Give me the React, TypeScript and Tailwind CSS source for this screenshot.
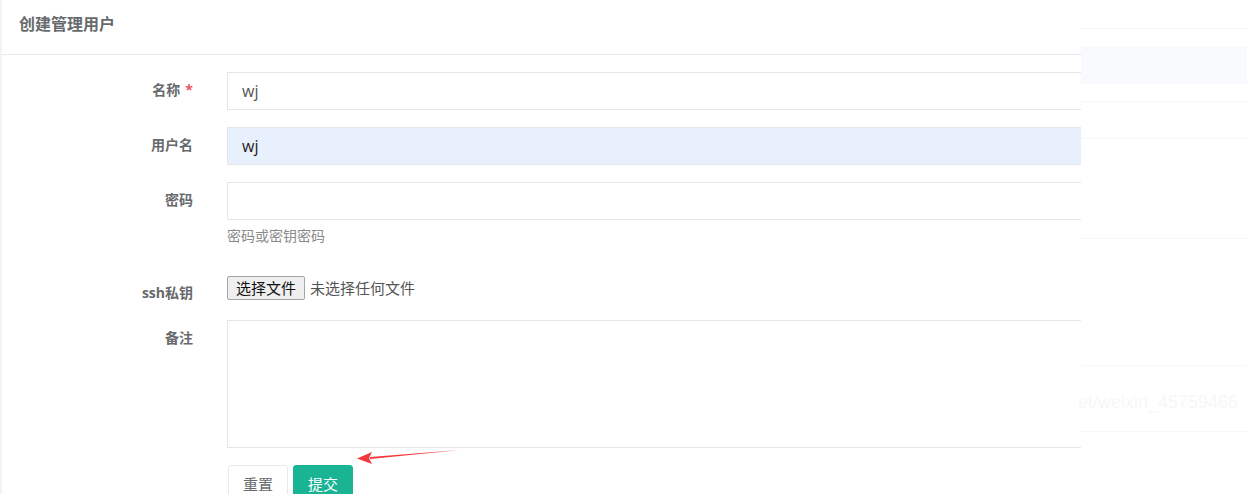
const font = 'font-["Open_Sans","Noto_Sans_CJK_SC",sans-serif]';

function FieldRow({
  label,
  required,
  labelPad = 'pt-[8px]',
  className = '',
  children,
}: {
  label: string;
  required?: boolean;
  labelPad?: string;
  className?: string;
  children: React.ReactNode;
}) {
  return (
    <div className={`flex items-start ${className}`}>
      <div className={`w-[193px] shrink-0 text-right text-[14px] leading-5 font-bold text-[#676a6c] ${labelPad}`}>
        {label}
        {required && <span className="ml-[5px] text-[#ed5565]">*</span>}
      </div>
      <div className="ml-[34px] flex-1 min-w-0 mr-[-12px]">{children}</div>
    </div>
  );
}

function Watermark() {
  return (
    <div className="relative w-[166px] shrink-0 h-full bg-white">
      <div className="h-[29px] border-b border-[#f6f6f6]" />
      <div className="h-[18px]" />
      <div className="h-[37px] bg-[#f9fafd]" />
      <div className="h-[18px] border-b border-[#f6f6f6]" />
      <div className="h-[37px] border-b border-[#f7f7f7]" />
      <div className="h-[100px] border-b border-[#f7f7f7]" />
      <div className="h-[127px] border-b border-[#f8f8f8]" />
      <div className="h-[46px] flex items-end">
        <span className="text-[18px] leading-5 ml-[-3px] text-[#f7f7f7] font-['Liberation_Sans',sans-serif] whitespace-nowrap">
          et/weixin_45759466
        </span>
      </div>
      <div className="h-[20px] border-b border-[#f6f6f6]" />
    </div>
  );
}

export default function App() {
  return (
    <div className={`relative flex h-[494px] w-[1247px] overflow-hidden bg-white ${font}`}>
      <div className="w-[1081px] shrink-0 h-full overflow-hidden border-l-2 border-[#f3f3f4]">
        <div className="h-[55px] border-b border-[#e7eaec] pl-[17px] pt-[14px]">
          <h5 className="text-[16px] leading-5 font-bold text-[#676a6c]">创建管理用户</h5>
        </div>

        <div className="pt-[17px] ml-[-2px]">
          <FieldRow label="名称" required>
            <input
              readOnly
              value="wj"
              className="block w-full h-[38px] border border-[#e5e6e7] px-[14px] text-[16px] text-[#555] outline-none"
            />
          </FieldRow>

          <FieldRow label="用户名" className="mt-[17px]">
            <input
              readOnly
              value="wj"
              className="block w-full h-[38px] border border-[#e5e6e7] bg-[#e8f0fe] px-[14px] text-[16px] text-[#222] outline-none"
            />
          </FieldRow>

          <FieldRow label="密码" className="mt-[17px]">
            <input
              type="password"
              readOnly
              className="block w-full h-[38px] border border-[#e5e6e7] px-[14px] text-[16px] outline-none"
            />
            <p className="mt-[7px] text-[14px] leading-[18px] text-[#8a8a8a]">密码或密钥密码</p>
          </FieldRow>

          <FieldRow label="ssh私钥" labelPad="pt-[7px]" className="mt-[31px]">
            <div className="flex items-center">
              <span className="h-[24px] px-[8px] flex items-center border border-[#a6a6a6] rounded-[2px] bg-[#efefef] text-[15px] text-[#111]">
                选择文件
              </span>
              <span className="ml-[5px] text-[15px] text-[#555]">未选择任何文件</span>
            </div>
          </FieldRow>

          <FieldRow label="备注" className="mt-[17px]">
            <textarea readOnly className="block w-full h-[128px] border border-[#e5e6e7] resize-none outline-none" />
          </FieldRow>

          <div className="flex ml-[228px] mt-[17px] gap-[5px]">
            <button className="w-[60px] h-[36px] pt-[8px] leading-5 border border-[#e7eaec] rounded-[3px] bg-white text-[15px] text-[#676a6c] flex justify-center items-start">
              重置
            </button>
            <button className="w-[60px] h-[36px] pt-[8px] leading-5 border border-[#1ab394] rounded-[3px] bg-[#1ab394] text-[15px] text-white flex justify-center items-start">
              提交
            </button>
          </div>
        </div>
      </div>

      <Watermark />

      <svg className="absolute left-[350px] top-[444px]" width="120" height="24" viewBox="0 0 120 24">
        <path d="M110 6 L20 13 L20 15 Z" fill="#f2383a" />
        <path d="M7 14.5 L22 8 L19 14 L22 20 Z" fill="#f2383a" />
      </svg>
    </div>
  );
}
